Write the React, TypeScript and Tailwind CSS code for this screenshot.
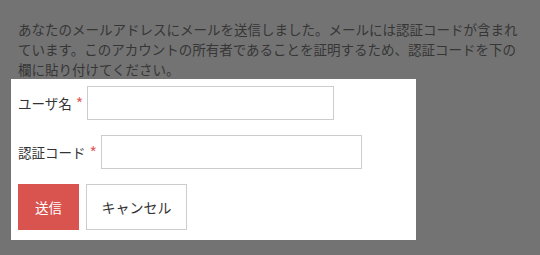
export default function App() {
  const font = { fontFamily: '"Noto Sans CJK JP", "Noto Sans", sans-serif' }

  return (
    <div className="min-h-screen bg-[#737373] pt-[19px]" style={font}>
      {/* Message */}
      <p className="px-[18px] text-[13.5px] leading-[20px] text-[#363636]">
        あなたのメールアドレスにメールを送信しました。メールには認証コードが含まれ
        <br />
        ています。このアカウントの所有者であることを証明するため、認証コードを下の
        <br />
        欄に貼り付けてください。
      </p>

      {/* Form panel */}
      <div className="ml-[11px] w-[405px] bg-white pl-[7px] pt-[7px] pb-[10px]">
        <div className="flex items-center">
          <label className="text-[13.5px] text-[#333]">ユーザ名</label>
          <span className="ml-[4px] text-[16px] leading-none text-[#e0605c]">*</span>
          <input type="text" className="ml-[4px] h-[34px] w-[247px] border border-[#ccc] bg-white outline-none" />
        </div>
        <div className="mt-[15px] flex items-center">
          <label className="text-[13.5px] text-[#333]">認証コード</label>
          <span className="ml-[4px] text-[16px] leading-none text-[#e0605c]">*</span>
          <input type="text" className="ml-[4px] h-[34px] w-[261px] border border-[#ccc] bg-white outline-none" />
        </div>
        <div className="mt-[15px] flex gap-[7px]">
          <button className="h-[46px] w-[61px] bg-[#d9534f] text-[13.5px] text-white">送信</button>
          <button className="h-[46px] w-[101px] border border-[#ccc] bg-white text-[14px] text-[#333]">キャンセル</button>
        </div>
      </div>
    </div>
  )
}
